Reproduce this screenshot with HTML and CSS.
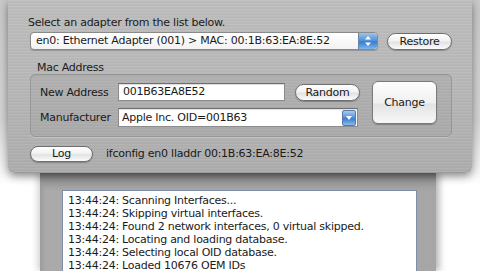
FILE: index.html
```html
<!DOCTYPE html>
<html>
<head>
<meta charset="utf-8">
<link rel="stylesheet" href="styles.css">
</head>
<body>
<div class="stage">
  <div class="window">
    <div class="caption">Select an adapter from the list below.</div>
    <div class="row-adapter">
      <div class="popup">
        <span class="popup-text">en0: Ethernet Adapter (001) &gt; MAC: 00:1B:63:EA:8E:52</span>
        <span class="stepper">
          <svg width="8" height="12" viewBox="0 0 8 12"><path d="M4 1 L7 4.5 L1 4.5 Z M4 11 L7 7.5 L1 7.5 Z" fill="#fff"/></svg>
        </span>
      </div>
      <div class="btn pill restore">Restore</div>
    </div>
    <div class="group-label">Mac Address</div>
    <div class="group">
      <div class="grid">
        <div class="label">New Address</div>
        <div class="field">001B63EA8E52</div>
        <div class="btn pill random">Random</div>
        <div class="label">Manufacturer</div>
        <div class="combo">
          <span class="combo-text">Apple Inc. OID=001B63</span>
          <span class="combo-arrow">
            <svg width="8" height="6" viewBox="0 0 8 6"><path d="M1 1 L7 1 L4 5 Z" fill="#fff"/></svg>
          </span>
        </div>
      </div>
      <div class="btn change">Change</div>
    </div>
    <div class="row-log">
      <div class="btn pill log">Log</div>
      <div class="cmd">ifconfig en0 lladdr 00:1B:63:EA:8E:52</div>
    </div>
  </div>
  <div class="drawer">
    <div class="logbox">
      <div>13:44:24: Scanning Interfaces...</div>
      <div>13:44:24: Skipping virtual interfaces.</div>
      <div>13:44:24: Found 2 network interfaces, 0 virtual skipped.</div>
      <div>13:44:24: Locating and loading database.</div>
      <div>13:44:24: Selecting local OID database.</div>
      <div>13:44:24: Loaded 10676 OEM IDs</div>
    </div>
  </div>
</div>
</body>
</html>
```
FILE: styles.css
```css
html, body {
  margin: 0;
  padding: 0;
  width: 480px;
  height: 271px;
  overflow: hidden;
  background: #ffffff;
}
body {
  font-family: "DejaVu Sans", "Liberation Sans", sans-serif;
  font-size: 11px;
  letter-spacing: -0.25px;
  color: #1a1a1a;
}
.stage {
  height: 271px;
  background: linear-gradient(180deg, #c9c9c9 0px, #d4d4d4 120px, #f4f4f4 170px, #ffffff 185px);
}
.window {
  position: relative;
  z-index: 2;
  margin-left: 8px;
  width: 464px;
  height: 173px;
  box-sizing: border-box;
  padding: 16px 0 0 22px;
  border-radius: 0 0 7px 7px;
  background:
    repeating-linear-gradient(180deg, rgba(255,255,255,0.06) 0px, rgba(255,255,255,0.06) 1px, rgba(0,0,0,0.03) 2px, rgba(0,0,0,0) 3px),
    linear-gradient(180deg, #bdbdbd 0%, #b7b7b7 50%, #acacac 100%);
  box-shadow: 0 3px 8px rgba(0,0,0,0.45), inset 0 -1px 0 #9a9a9a;
}
.caption {
  line-height: 13px;
  height: 13px;
  padding-left: -2px;
  margin-left: -2px;
}
.row-adapter {
  display: flex;
  align-items: center;
  margin-top: 3px;
  height: 18px;
}
.popup {
  width: 348px;
  height: 18px;
  box-sizing: border-box;
  display: flex;
  align-items: center;
  background: linear-gradient(180deg, #ffffff, #f3f3f3);
  border: 1px solid #8a8a8a;
  border-radius: 4px;
  box-shadow: 0 1px 1px rgba(0,0,0,0.2);
  overflow: hidden;
}
.popup-text {
  flex: 1;
  padding-left: 5px;
  line-height: 16px;
  white-space: nowrap;
}
.stepper {
  width: 18px;
  height: 16px;
  display: flex;
  align-items: center;
  justify-content: center;
  background: linear-gradient(180deg, #9cc3ec 0%, #4f8fd6 50%, #3a7ccb 55%, #7db6ef 100%);
  border-left: 1px solid #6b86a8;
  border-radius: 0 3px 3px 0;
}
.btn {
  box-sizing: border-box;
  display: flex;
  align-items: center;
  justify-content: center;
  border: 1px solid #6f6f6f;
  background: linear-gradient(180deg, #ffffff 0%, #f2f2f2 45%, #e2e2e2 55%, #fbfbfb 100%);
  box-shadow: 0 1px 1px rgba(0,0,0,0.25);
  color: #1a1a1a;
}
.pill {
  height: 17px;
  border-radius: 9px;
  line-height: 15px;
}
.restore {
  width: 65px;
  margin-left: 9px;
}
.group-label {
  margin-top: 11px;
  margin-left: 7px;
  line-height: 13px;
  height: 13px;
}
.group {
  width: 422px;
  height: 63px;
  box-sizing: border-box;
  display: flex;
  align-items: flex-start;
  padding: 8px 14px 0 9px;
  border: 1px solid #979797;
  border-radius: 5px;
  background: rgba(0,0,0,0.035);
  box-shadow: inset 0 1px 0 rgba(0,0,0,0.06), 0 1px 0 rgba(255,255,255,0.25);
}
.grid {
  display: grid;
  grid-template-columns: 68px 167px 65px;
  grid-template-rows: 18px 19px;
  column-gap: 10px;
  row-gap: 7px;
  align-items: center;
}
.label {
  white-space: nowrap;
  line-height: 13px;
}
.field {
  height: 18px;
  box-sizing: border-box;
  background: #ffffff;
  border: 1px solid #8c8c8c;
  border-top-color: #6e6e6e;
  box-shadow: inset 0 1px 1px rgba(0,0,0,0.15);
  padding-left: 4px;
  line-height: 16px;
}
.random {
  width: 65px;
}
.combo {
  grid-column: 2 / 4;
  width: 240px;
  height: 19px;
  box-sizing: border-box;
  display: flex;
  align-items: center;
  background: #ffffff;
  border: 1px solid #8c8c8c;
  border-top-color: #6e6e6e;
  box-shadow: inset 0 1px 1px rgba(0,0,0,0.12);
}
.combo-text {
  flex: 1;
  padding-left: 3px;
  line-height: 17px;
  white-space: nowrap;
}
.combo-arrow {
  width: 12px;
  height: 14px;
  margin-right: 1px;
  display: flex;
  align-items: center;
  justify-content: center;
  background: linear-gradient(180deg, #a8ccf2 0%, #4f8fd6 50%, #3a7ccb 55%, #86bdf2 100%);
  border: 1px solid #5a7aa3;
  border-radius: 2px;
}
.change {
  width: 66px;
  height: 43px;
  margin-left: 12px;
  margin-top: -2px;
  border-radius: 6px;
  border-color: #7a7a7a;
  background: linear-gradient(180deg, #fdfdfd 0%, #f0f0f0 50%, #e4e4e4 55%, #f7f7f7 100%);
}
.row-log {
  display: flex;
  align-items: center;
  margin-top: 8px;
  height: 17px;
}
.log {
  width: 63px;
  height: 16px;
}
.cmd {
  margin-left: 13px;
  white-space: nowrap;
}
.drawer {
  position: relative;
  z-index: 1;
  margin-left: 40px;
  width: 396px;
  height: 98px;
  box-sizing: border-box;
  padding: 17px 19px 0 22px;
  background:
    linear-gradient(180deg, #7f7f7f 0px, #9a9a9a 10px, rgba(0,0,0,0) 18px),
    linear-gradient(90deg, #9c9c9c 0px, #aaaaaa 6px, #a6a6a6 100%);
  box-shadow: 4px 0 6px rgba(0,0,0,0.25), -3px 0 6px rgba(0,0,0,0.15);
}
.logbox {
  height: 81px;
  box-sizing: border-box;
  background: #ffffff;
  border: 1px solid #7d8fa8;
  border-bottom: none;
  padding: 3px 0 0 5px;
  line-height: 13px;
  white-space: nowrap;
  overflow: hidden;
}
```
